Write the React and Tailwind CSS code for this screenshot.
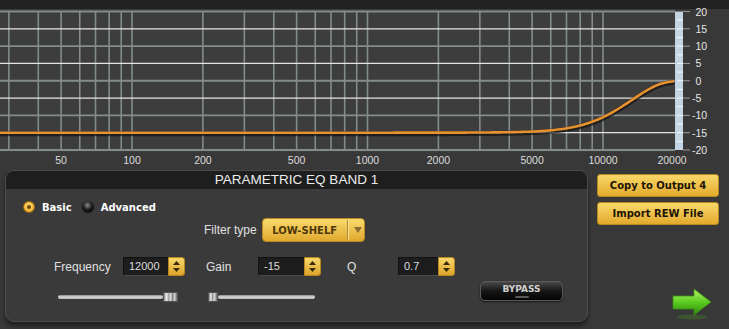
import React from 'react';

const FONT = { fontFamily: '"Liberation Sans", Arial, sans-serif' };
const BOLD = { fontFamily: '"DejaVu Sans", Verdana, sans-serif', fontWeight: 700 };

// log frequency axis: 100 Hz at x=132, one decade = 235.5px
const fx = (f) => 132 + 235.5 * Math.log10(f / 100);
const dby = (db) => 80.75 - db * 3.4625;

const gridFreqs = [
	30, 40, 50, 60, 70, 80, 90, 100, 200, 300, 400, 500, 600, 700, 800, 900, 1000, 2000, 3000, 4000, 5000, 6000,
	7000, 8000, 9000, 10000,
];
const freqLabels = [50, 100, 200, 500, 1000, 2000, 5000, 10000, 20000];
const dbLabels = [20, 15, 10, 5, 0, -5, -10, -15, -20];

function lowShelfDb(f) {
	const fs = 48000, f0 = 12000, gain = -15, q = 0.7;
	const A = Math.pow(10, gain / 40);
	const w0 = (2 * Math.PI * f0) / fs;
	const cw = Math.cos(w0);
	const alpha = Math.sin(w0) / (2 * q);
	const sa = 2 * Math.sqrt(A) * alpha;
	const b0 = A * (A + 1 - (A - 1) * cw + sa);
	const b1 = 2 * A * (A - 1 - (A + 1) * cw);
	const b2 = A * (A + 1 - (A - 1) * cw - sa);
	const a0 = A + 1 + (A - 1) * cw + sa;
	const a1 = -2 * (A - 1 + (A + 1) * cw);
	const a2 = A + 1 + (A - 1) * cw - sa;
	const w = (2 * Math.PI * f) / fs;
	const mag = (c0, c1, c2) => {
		const re = c0 + c1 * Math.cos(w) + c2 * Math.cos(2 * w);
		const im = -c1 * Math.sin(w) - c2 * Math.sin(2 * w);
		return re * re + im * im;
	};
	return 10 * Math.log10(mag(b0, b1, b2) / mag(a0, a1, a2));
}

function curvePath() {
	const pts = [];
	for (let x = 0; x <= 675; x += 2) {
		const f = 100 * Math.pow(10, (x - 132) / 235.5);
		pts.push(`${x},${dby(lowShelfDb(f)).toFixed(2)}`);
	}
	return 'M' + pts.join(' L');
}

function Chart() {
	const d = curvePath();
	const minor = [];
	for (let db = 17.5; db > -20; db -= 2.5) minor.push(db);
	return (
		<svg width="729" height="170" className="block shrink-0" style={FONT}>
			<rect x="0" y="0" width="729" height="9" fill="#212121" />
			<rect x="0" y="9" width="675" height="143" fill="#3d3d3d" />
			{/* vertical grid */}
			{gridFreqs.map((f) => (
				<line key={f} x1={fx(f)} x2={fx(f)} y1={dby(20)} y2={dby(-20)} stroke="#838c8c" strokeWidth="1.6" />
			))}
			{/* horizontal grid */}
			{dbLabels.map((db) => (
				<line
					key={db}
					x1="0"
					x2="675"
					y1={dby(db)}
					y2={dby(db)}
					stroke={db % 10 === 0 ? '#848c8c' : '#e4e4e4'}
					strokeWidth={db % 10 === 0 ? 1.8 : 1.2}
				/>
			))}
			{/* response curve */}
			<path d={d} fill="none" stroke="#111" strokeOpacity="0.7" strokeWidth="5" transform="translate(0,1)" />
			<path d={d} fill="none" stroke="#e8912f" strokeWidth="2.6" />
			{/* level bar */}
			<rect x="675" y={dby(20)} width="8" height={dby(-20) - dby(20)} fill="#c4d4e2" />
			{minor.map((db) => (
				<line key={db} x1="677" x2="683" y1={dby(db)} y2={dby(db)} stroke="#f4f8fb" strokeWidth="1" />
			))}
			{dbLabels.map((db) => (
				<g key={db}>
					<line x1="683" x2="690" y1={dby(db)} y2={dby(db)} stroke="#9a9a9a" strokeWidth="1" />
					<text x={db < 0 ? 692 : 695.5} y={dby(db) + 4} fontSize="10.5" fill="#e6e6e6">
						{db}
					</text>
				</g>
			))}
			{freqLabels.map((f) => (
				<text key={f} x={Math.min(fx(f), 672)} y="163.5" fontSize="10.5" fill="#dcdcdc" textAnchor="middle">
					{f}
				</text>
			))}
		</svg>
	);
}

function Spinner({ value, width }) {
	return (
		<div className="flex h-[19px] shrink-0">
			<div
				className="flex items-center pl-[5px] text-[11px] text-[#dedede] bg-[#1d1d1d] border border-[#121212] border-b-[#4a4a4a] border-r-0"
				style={{ ...FONT, width }}
			>
				{value}
			</div>
			<div className="w-[17px] rounded-r-[3px] bg-gradient-to-b from-[#f8d86a] to-[#dba42a] border border-[#b8861f] flex flex-col items-center justify-center gap-[3px]">
				<svg width="7" height="4">
					<path d="M3.5 0 L7 4 L0 4 Z" fill="#3b2a08" />
				</svg>
				<svg width="7" height="4">
					<path d="M0 0 L7 0 L3.5 4 Z" fill="#3b2a08" />
				</svg>
			</div>
		</div>
	);
}

function Thumb() {
	return (
		<div className="w-[15px] h-[10px] shrink-0 border border-[#555] bg-[linear-gradient(90deg,#8a8a8a,#eeeeee_20%,#9a9a9a_38%,#e4e4e4_52%,#7a7a7a_66%,#d8d8d8_80%,#6a6a6a)]" />
	);
}

function Track({ width }) {
	return (
		<div
			className="h-[4px] rounded-full bg-gradient-to-b from-[#8a8a8a] via-[#dcdcdc] to-[#b0b0b0]"
			style={{ width }}
		/>
	);
}

function Panel() {
	return (
		<div className="ml-[5px] w-[583px] h-[152px] rounded-[9px] border border-[#4c4c4c] bg-[#3a3a3a] overflow-hidden shadow-[0_4px_4px_rgba(0,0,0,0.45)] flex flex-col">
			<div
				className="h-[18px] bg-[#1e1e1e] flex items-center justify-center text-[13.5px] text-[#ececec] shrink-0"
				style={FONT}
			>
				PARAMETRIC EQ BAND 1
			</div>

			{/* mode radios */}
			<div className="flex items-center h-[12px] mt-[12px] pl-[17px] text-[10px] text-white" style={BOLD}>
				<div className="w-[12px] h-[12px] rounded-full border border-[#9a6a10] bg-[radial-gradient(circle_at_50%_40%,#ffe08a,#f2b83a_60%,#c98a1c)] flex items-center justify-center">
					<div className="w-[4px] h-[4px] rounded-full bg-[#6a4608]" />
				</div>
				<span className="ml-[7px]">Basic</span>
				<div className="ml-[10px] w-[12px] h-[12px] rounded-full bg-[radial-gradient(circle_at_45%_35%,#8a8a8a,#1a1a1a_45%,#000)]" />
				<span className="ml-[7px]">Advanced</span>
			</div>

			{/* filter type */}
			<div className="flex items-center mt-[5px] pl-[198px] h-[24px]">
				<span className="text-[12px] text-[#e0e0e0]" style={FONT}>
					Filter type
				</span>
				<div className="ml-[5px] w-[103px] h-[24px] rounded-[4px] border border-[#b88a20] bg-gradient-to-b from-[#f9da6c] to-[#e0a92c] flex items-center">
					<span className="w-[84px] text-center text-[10px] text-[#4e3808]" style={BOLD}>
						LOW-SHELF
					</span>
					<div className="w-[1px] h-[20px] bg-[#b5862a] border-r border-[#fbe39a] box-content" />
					<svg width="8" height="6" className="ml-[5px]">
						<path d="M0 0 L8 0 L4 6 Z" fill="#8a6a32" />
					</svg>
				</div>
			</div>

			{/* parameters */}
			<div className="flex items-center mt-[15px] h-[19px] pl-[48px] text-[12px] text-[#e0e0e0]" style={FONT}>
				<span className="w-[69px]">Frequency</span>
				<Spinner value="12000" width={45} />
				<span className="ml-[21px] w-[52px]">Gain</span>
				<Spinner value="-15" width={46} />
				<span className="ml-[26px] w-[51px]">Q</span>
				<Spinner value="0.7" width={40} />
			</div>

			{/* sliders + bypass */}
			<div className="flex items-start mt-[5px]">
				<div className="flex items-center ml-[52px] mt-[11px] h-[10px]">
					<Track width={105} />
					<Thumb />
				</div>
				<div className="flex items-center ml-[30px] mt-[11px] h-[10px]">
					<div className="w-[10px] h-[10px] border border-[#555] bg-[linear-gradient(90deg,#8a8a8a,#eeeeee_25%,#8a8a8a_45%,#e0e0e0_65%,#6a6a6a)]" />
					<Track width={97} />
				</div>
				<div className="ml-[165px] w-[83px] h-[20px] rounded-[5px] border border-[#5a5a5a] bg-gradient-to-b from-[#4a4a4a] via-[#161616] to-[#050505] flex flex-col items-center justify-center shadow-[0_1px_2px_rgba(0,0,0,0.6)]">
					<span className="text-[9px] leading-[10px] text-[#cfcfcf]" style={BOLD}>
						BYPASS
					</span>
					<div className="mt-[2px] w-[14px] h-[2px] rounded-full bg-[#5a5a5a]" />
				</div>
			</div>
		</div>
	);
}

function YellowButton({ children }) {
	return (
		<div
			className="w-[122px] h-[23px] rounded-[3px] border border-[#b8891f] bg-gradient-to-b from-[#f8d868] to-[#e3aa2a] flex items-center justify-center text-[10px] text-[#1c1406]"
			style={BOLD}
		>
			{children}
		</div>
	);
}

function GreenArrow() {
	return (
		<svg width="42" height="34" className="ml-[75px] mt-[62px]">
			<defs>
				<linearGradient id="ga" x1="0" y1="0" x2="0" y2="1">
					<stop offset="0" stopColor="#b6f56a" />
					<stop offset="0.5" stopColor="#5ccc22" />
					<stop offset="1" stopColor="#2f8c0c" />
				</linearGradient>
			</defs>
			<ellipse cx="20" cy="30" rx="15" ry="2.5" fill="#4a9a22" opacity="0.3" />
			<path d="M1 9 L22 9 L22 2 L39 15 L22 28 L22 22 L1 22 Z" fill="url(#ga)" stroke="#3a8f12" strokeWidth="0.8" />
		</svg>
	);
}

export default function App() {
	return (
		<div className="w-[729px] h-[329px] bg-[#383838] flex flex-col overflow-hidden">
			<Chart />
			<div className="flex">
				<Panel />
				<div className="ml-[9px] flex flex-col">
					<div className="mt-[4px]">
						<YellowButton>Copy to Output 4</YellowButton>
					</div>
					<div className="mt-[5px]">
						<YellowButton>Import REW File</YellowButton>
					</div>
					<GreenArrow />
				</div>
			</div>
		</div>
	);
}
